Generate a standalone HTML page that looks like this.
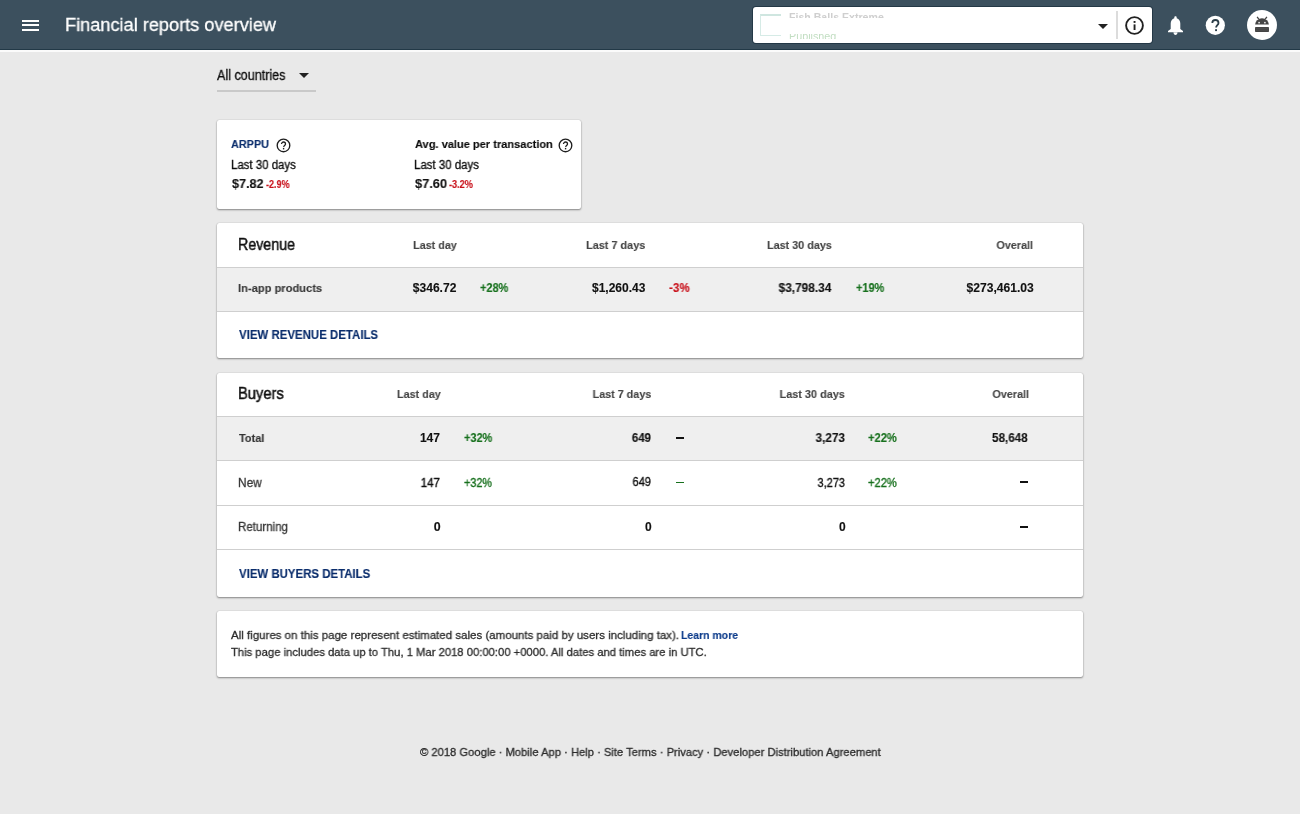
<!DOCTYPE html>
<html><head><meta charset="utf-8">
<style>
html,body{margin:0;padding:0;}
body{width:1300px;height:814px;overflow:hidden;background:#e9e9e9;position:relative;font-family:"Liberation Sans",sans-serif;color:#212121;}
.a{position:absolute;white-space:nowrap;line-height:1;will-change:transform;}
.m{-webkit-text-stroke:0.3px;}
.k{-webkit-text-stroke:0.12px;}
.hdr{position:absolute;left:0;top:0;width:1300px;height:50px;background:#3c505e;}
.card{position:absolute;background:#fff;border-radius:2px;box-shadow:0 1px 2px rgba(0,0,0,.42),0 0 1px rgba(0,0,0,.28);}
.b{font-weight:700;}
.r{text-align:right;}
.navy{color:#0d2f72;}
.grn{color:#1b7a1b;}
.red{color:#c62828;}
.hl{position:absolute;left:0;width:100%;height:1px;background:#cfcfcf;}
.stripe{position:absolute;left:0;width:100%;background:#efefef;}
</style></head><body>

<div class="hdr"></div>
<div style="position:absolute;left:0;top:49px;width:1300px;height:1px;background:#223947"></div>
<div style="position:absolute;left:0;top:50px;width:1300px;height:1.5px;background:#fbfbfb"></div>
<!-- hamburger -->
<div style="position:absolute;left:22px;top:20px;width:17px;height:2px;background:#fff"></div>
<div style="position:absolute;left:22px;top:24px;width:17px;height:2px;background:#fff"></div>
<div style="position:absolute;left:22px;top:29px;width:17px;height:2px;background:#fff"></div>

<!-- app selector -->
<div style="position:absolute;left:753px;top:7px;width:399px;height:36px;background:#fff;border-radius:3px;box-shadow:0 0 0 1px rgba(20,40,55,.6)"></div>
<div style="position:absolute;left:760px;top:14px;width:21px;height:22px;box-sizing:border-box;border:1px solid #d6ebe6;border-top:2px solid #cfe6e0;border-right:none"></div>
<div style="position:absolute;left:789px;top:12.5px;width:96px;height:4.8px;overflow:hidden;will-change:transform"><div style="position:absolute;white-space:nowrap;line-height:1;left:0;top:-1.2px;font-size:11.4px;font-weight:700;color:#cfcfcf;transform:scaleX(.93);transform-origin:0 0">Fish Balls Extreme</div></div>
<div style="position:absolute;left:789px;top:33.5px;width:52px;height:5px;overflow:hidden;will-change:transform"><div style="position:absolute;white-space:nowrap;line-height:1;left:0;top:-4.4px;font-size:11.6px;color:#c2dec2;transform:scaleX(.93);transform-origin:0 0">Published</div></div>
<!-- arrow -->
<svg style="position:absolute;left:1098px;top:24px" width="10" height="5"><path d="M0 0H10L5 5Z" fill="#222"/></svg>
<div style="position:absolute;left:1116px;top:11px;width:1.5px;height:28px;background:#dcdcdc"></div>
<!-- info icon -->
<svg style="position:absolute;left:1125px;top:16px" width="19" height="19" viewBox="0 0 19 19"><circle cx="9.5" cy="9.5" r="8.4" fill="none" stroke="#212121" stroke-width="1.9"/><rect x="8.6" y="5" width="1.9" height="1.9" fill="#212121"/><rect x="8.6" y="8.4" width="1.9" height="5.6" fill="#212121"/></svg>
<!-- bell -->
<svg style="position:absolute;left:1165px;top:14px" width="21" height="23" viewBox="0 0 21 23"><path d="M10.5 2.2c.7 0 1.2.5 1.2 1.2v.8c2.3.7 3.6 2.8 3.6 5.3V15l2.7 2v1.3H3V17l2.7-2V9.5c0-2.5 1.3-4.6 3.6-5.3v-.8c0-.7.5-1.2 1.2-1.2zM8.5 18.6h4c0 1.3-.9 2.4-2 2.4s-2-1.1-2-2.4z" fill="#fff"/></svg>
<!-- help -->
<svg style="position:absolute;left:1205px;top:15px" width="21" height="21" viewBox="0 0 21 21"><circle cx="10.3" cy="10.3" r="9.6" fill="#fff"/><path d="M7.3 8.1c0-1.8 1.4-3.1 3.1-3.1s3.1 1.3 3.1 2.9c0 2.1-2.4 2.3-2.4 4.6" fill="none" stroke="#2b3d48" stroke-width="1.8"/><rect x="10.1" y="14.2" width="1.9" height="1.9" fill="#2b3d48"/></svg>
<!-- avatar -->
<div style="position:absolute;left:1247px;top:10px;width:30px;height:30px;border-radius:50%;background:#fff"></div>
<svg style="position:absolute;left:1254px;top:16px" width="16" height="17" viewBox="0 0 16 17"><path d="M1.1 8.6A6.9 6.3 0 0 1 14.9 8.6z" fill="#444"/><path d="M3.1 .9l1.7 2.3M12.9 .9l-1.7 2.3" stroke="#444" stroke-width="1.3"/><rect x="4.3" y="5.9" width="1.6" height="1.5" fill="#eee"/><rect x="10.1" y="5.9" width="1.6" height="1.5" fill="#eee"/><rect x="1" y="11" width="14" height="5" rx=".8" fill="#444"/><rect x="1" y="12.6" width="14" height=".5" fill="#555"/><rect x="1" y="14.2" width="14" height=".5" fill="#555"/></svg>

<!-- country selector -->
<svg style="position:absolute;left:299px;top:73px" width="10" height="5"><path d="M0 0H10L5 5Z" fill="#212121"/></svg>
<div style="position:absolute;left:217px;top:90px;width:99px;height:1.5px;background:#c9c9c9"></div>

<!-- ARPPU card -->
<div class="card" style="left:217px;top:120px;width:364px;height:89px"></div>
<svg style="position:absolute;left:276px;top:138px" width="15" height="15" viewBox="0 0 15 15"><circle cx="7.5" cy="7.4" r="6.3" fill="none" stroke="#1e1e1e" stroke-width="1.35"/><path d="M5.5 6.1c0-1.2.9-2.1 2-2.1s2 .9 2 1.9c0 1.4-1.7 1.6-1.9 3" fill="none" stroke="#1e1e1e" stroke-width="1.3"/><rect x="6.9" y="9.9" width="1.35" height="1.5" fill="#1e1e1e"/></svg>

<svg style="position:absolute;left:558px;top:138px" width="15" height="15" viewBox="0 0 15 15"><circle cx="7.5" cy="7.4" r="6.3" fill="none" stroke="#1e1e1e" stroke-width="1.35"/><path d="M5.5 6.1c0-1.2.9-2.1 2-2.1s2 .9 2 1.9c0 1.4-1.7 1.6-1.9 3" fill="none" stroke="#1e1e1e" stroke-width="1.3"/><rect x="6.9" y="9.9" width="1.35" height="1.5" fill="#1e1e1e"/></svg>

<!-- Revenue card -->
<div class="card" style="left:217px;top:223px;width:866px;height:135px;overflow:hidden">
  <div class="hl" style="top:44px"></div>
  <div class="stripe" style="top:45px;height:43px"></div>
  <div class="hl" style="top:87.5px"></div>
</div>

<!-- Buyers card -->
<div class="card" style="left:217px;top:372.5px;width:866px;height:224px;overflow:hidden">
  <div class="hl" style="top:43.5px"></div>
  <div class="stripe" style="top:44.5px;height:43px"></div>
  <div class="hl" style="top:87.5px"></div>
  <div class="hl" style="top:132px"></div>
  <div class="hl" style="top:176.5px"></div>
</div>

<!-- Footer info card -->
<div class="card" style="left:217px;top:611px;width:866px;height:65.5px"></div>

<!--TXT-->
<div class="a m" style="left:65.03px;transform-origin:0 0;top:15.97px;font-size:18.7px;color:#fff;transform:scaleX(0.9722);">Financial reports overview</div>
<div class="a m" style="left:216.9px;transform-origin:0 0;top:68.92px;font-size:13.8px;color:#0c0c0c;transform:scaleX(0.9107);">All countries</div>
<div class="a k" style="left:231.2px;transform-origin:0 0;top:139.31px;font-size:11.8px;font-weight:700;color:#0a2d6c;transform:scaleX(0.9195);">ARPPU</div>
<div class="a m" style="left:230.85px;transform-origin:0 0;top:159.24px;font-size:12px;color:#0c0c0c;transform:scaleX(0.9537);">Last 30 days</div>
<div class="a k" style="left:231.8px;transform-origin:0 0;top:177.36px;font-size:13.4px;font-weight:700;color:#111;transform:scaleX(0.9424);">$7.82</div>
<div class="a k" style="left:266.3px;transform-origin:0 0;top:178.86px;font-size:10.8px;font-weight:700;color:#c8101a;transform:scaleX(0.8393);">-2.9%</div>
<div class="a k" style="left:414.7px;transform-origin:0 0;top:139.41px;font-size:11.8px;font-weight:700;color:#0c0c0c;transform:scaleX(0.937);">Avg. value per transaction</div>
<div class="a m" style="left:413.74px;transform-origin:0 0;top:159.14px;font-size:12px;color:#0c0c0c;transform:scaleX(0.9552);">Last 30 days</div>
<div class="a k" style="left:414.7px;transform-origin:0 0;top:176.56px;font-size:13.4px;font-weight:700;color:#111;transform:scaleX(0.9576);">$7.60</div>
<div class="a k" style="left:449.3px;transform-origin:0 0;top:178.86px;font-size:10.8px;font-weight:700;color:#c8101a;transform:scaleX(0.85);">-3.2%</div>
<div class="a" style="left:237.9px;transform-origin:0 0;top:236.53px;font-size:15.8px;color:#111;transform:scaleX(0.9);-webkit-text-stroke:0.5px">Revenue</div>
<div class="a k" style="right:843.31px;transform-origin:100% 0;top:239.81px;font-size:11.8px;font-weight:700;color:#454545;transform:scaleX(0.9138);">Last day</div>
<div class="a k" style="right:654.76px;transform-origin:100% 0;top:239.81px;font-size:11.8px;font-weight:700;color:#454545;transform:scaleX(0.9206);">Last 7 days</div>
<div class="a k" style="right:468.46px;transform-origin:100% 0;top:239.81px;font-size:11.8px;font-weight:700;color:#454545;transform:scaleX(0.9143);">Last 30 days</div>
<div class="a k" style="right:266.57px;transform-origin:100% 0;top:239.81px;font-size:11.8px;font-weight:700;color:#454545;transform:scaleX(0.9154);">Overall</div>
<div class="a k" style="left:237.66px;transform-origin:0 0;top:283.21px;font-size:11.8px;font-weight:700;color:#383838;transform:scaleX(0.9443);">In-app products</div>
<div class="a k" style="right:843.31px;transform-origin:100% 0;top:281.64px;font-size:12px;font-weight:700;color:#111;transform:scaleX(1.0047);">$346.72</div>
<div class="a k" style="left:480.2px;transform-origin:0 0;top:281.64px;font-size:12px;font-weight:700;color:#17701d;transform:scaleX(0.9129);">+28%</div>
<div class="a k" style="right:654.61px;transform-origin:100% 0;top:281.64px;font-size:12px;font-weight:700;color:#111;transform:scaleX(1.0);">$1,260.43</div>
<div class="a k" style="left:668.5px;transform-origin:0 0;top:281.64px;font-size:12px;font-weight:700;color:#c8101a;transform:scaleX(0.9667);">-3%</div>
<div class="a k" style="right:468.2px;transform-origin:100% 0;top:281.64px;font-size:12px;font-weight:700;color:#111;transform:scaleX(0.9889);">$3,798.34</div>
<div class="a k" style="left:856.0px;transform-origin:0 0;top:281.64px;font-size:12px;font-weight:700;color:#17701d;transform:scaleX(0.9129);">+19%</div>
<div class="a k" style="right:266.76px;transform-origin:100% 0;top:281.64px;font-size:12px;font-weight:700;color:#111;transform:scaleX(1.0076);">$273,461.03</div>
<div class="a k" style="left:238.6px;transform-origin:0 0;top:328.63px;font-size:12.6px;font-weight:700;color:#0a2d6c;transform:scaleX(0.9092);">VIEW REVENUE DETAILS</div>
<div class="a" style="left:237.87px;transform-origin:0 0;top:385.73px;font-size:15.8px;color:#111;transform:scaleX(0.9312);-webkit-text-stroke:0.5px">Buyers</div>
<div class="a k" style="right:859.51px;transform-origin:100% 0;top:388.91px;font-size:11.8px;font-weight:700;color:#454545;transform:scaleX(0.917);">Last day</div>
<div class="a k" style="right:648.76px;transform-origin:100% 0;top:388.91px;font-size:11.8px;font-weight:700;color:#454545;transform:scaleX(0.9127);">Last 7 days</div>
<div class="a k" style="right:455.66px;transform-origin:100% 0;top:388.91px;font-size:11.8px;font-weight:700;color:#454545;transform:scaleX(0.9214);">Last 30 days</div>
<div class="a k" style="right:271.07px;transform-origin:100% 0;top:388.91px;font-size:11.8px;font-weight:700;color:#454545;transform:scaleX(0.9154);">Overall</div>
<div class="a k" style="left:238.8px;transform-origin:0 0;top:433.31px;font-size:11.8px;font-weight:700;color:#333;transform:scaleX(0.9296);">Total</div>
<div class="a k" style="right:859.87px;transform-origin:100% 0;top:432.04px;font-size:12px;font-weight:700;color:#111;transform:scaleX(1.0053);">147</div>
<div class="a k" style="left:463.7px;transform-origin:0 0;top:432.04px;font-size:12px;font-weight:700;color:#17701d;transform:scaleX(0.9129);">+32%</div>
<div class="a k" style="right:648.77px;transform-origin:100% 0;top:431.84px;font-size:12px;font-weight:700;color:#111;transform:scaleX(0.96);">649</div>
<div class="a k" style="right:455.47px;transform-origin:100% 0;top:432.04px;font-size:12px;font-weight:700;color:#111;transform:scaleX(0.9833);">3,273</div>
<div class="a k" style="left:868.0px;transform-origin:0 0;top:432.04px;font-size:12px;font-weight:700;color:#17701d;transform:scaleX(0.929);">+22%</div>
<div class="a k" style="right:272.29px;transform-origin:100% 0;top:432.04px;font-size:12px;font-weight:700;color:#111;transform:scaleX(0.973);">58,648</div>
<div class="a m" style="left:237.76px;transform-origin:0 0;top:476.64px;font-size:12px;color:#383838;transform:scaleX(0.9891);">New</div>
<div class="a" style="right:859.57px;transform-origin:100% 0;top:477.44px;font-size:12px;color:#111;transform:scaleX(0.9684);-webkit-text-stroke:0.35px">147</div>
<div class="a" style="left:464.0px;transform-origin:0 0;top:477.44px;font-size:12px;color:#17701d;transform:scaleX(0.9032);-webkit-text-stroke:0.35px">+32%</div>
<div class="a" style="right:648.57px;transform-origin:100% 0;top:476.34px;font-size:12px;color:#111;transform:scaleX(0.925);-webkit-text-stroke:0.35px">649</div>
<div class="a" style="right:455.47px;transform-origin:100% 0;top:477.44px;font-size:12px;color:#111;transform:scaleX(0.9167);-webkit-text-stroke:0.35px">3,273</div>
<div class="a" style="left:868.0px;transform-origin:0 0;top:477.44px;font-size:12px;color:#17701d;transform:scaleX(0.929);-webkit-text-stroke:0.35px">+22%</div>
<div class="a m" style="left:237.79px;transform-origin:0 0;top:520.84px;font-size:12px;color:#383838;transform:scaleX(0.961);">Returning</div>
<div class="a k" style="right:858.89px;transform-origin:100% 0;top:520.74px;font-size:12px;font-weight:700;color:#111;transform:scaleX(1.0333);">0</div>
<div class="a k" style="right:648.31px;transform-origin:100% 0;top:520.74px;font-size:12px;font-weight:700;color:#111;transform:scaleX(1.0);">0</div>
<div class="a k" style="right:454.31px;transform-origin:100% 0;top:520.74px;font-size:12px;font-weight:700;color:#111;transform:scaleX(1.0);">0</div>
<div class="a k" style="left:238.75px;transform-origin:0 0;top:568.23px;font-size:12.6px;font-weight:700;color:#0a2d6c;transform:scaleX(0.9073);">VIEW BUYERS DETAILS</div>
<div class="a m" style="left:231.4px;transform-origin:0 0;top:628.78px;font-size:11.6px;color:#2c2c2c;transform:scaleX(0.9918);">All figures on this page represent estimated sales (amounts paid by users including tax).</div>
<div class="a k" style="left:681.0px;transform-origin:0 0;top:628.78px;font-size:11.6px;font-weight:700;color:#0b3a8a;transform:scaleX(0.9032);">Learn more</div>
<div class="a m" style="left:231.4px;transform-origin:0 0;top:645.58px;font-size:11.6px;color:#2c2c2c;transform:scaleX(0.971);">This page includes data up to Thu, 1 Mar 2018 00:00:00 +0000. All dates and times are in UTC.</div>
<div class="a m" style="left:419.8px;transform-origin:0 0;top:745.88px;font-size:11.6px;color:#2a2a2a;transform:scaleX(0.9665);">&copy; 2018 Google &middot; Mobile App &middot; Help &middot; Site Terms &middot; Privacy &middot; Developer Distribution Agreement</div>
<div style="position:absolute;left:676px;top:437px;width:8px;height:2px;background:#111"></div>
<div style="position:absolute;left:676px;top:481.5px;width:8px;height:1.6px;background:#17701d"></div>
<div style="position:absolute;left:1020px;top:481px;width:8px;height:2px;background:#111"></div>
<div style="position:absolute;left:1020px;top:526px;width:8px;height:2px;background:#111"></div>
<!--/TXT-->
</body></html>
